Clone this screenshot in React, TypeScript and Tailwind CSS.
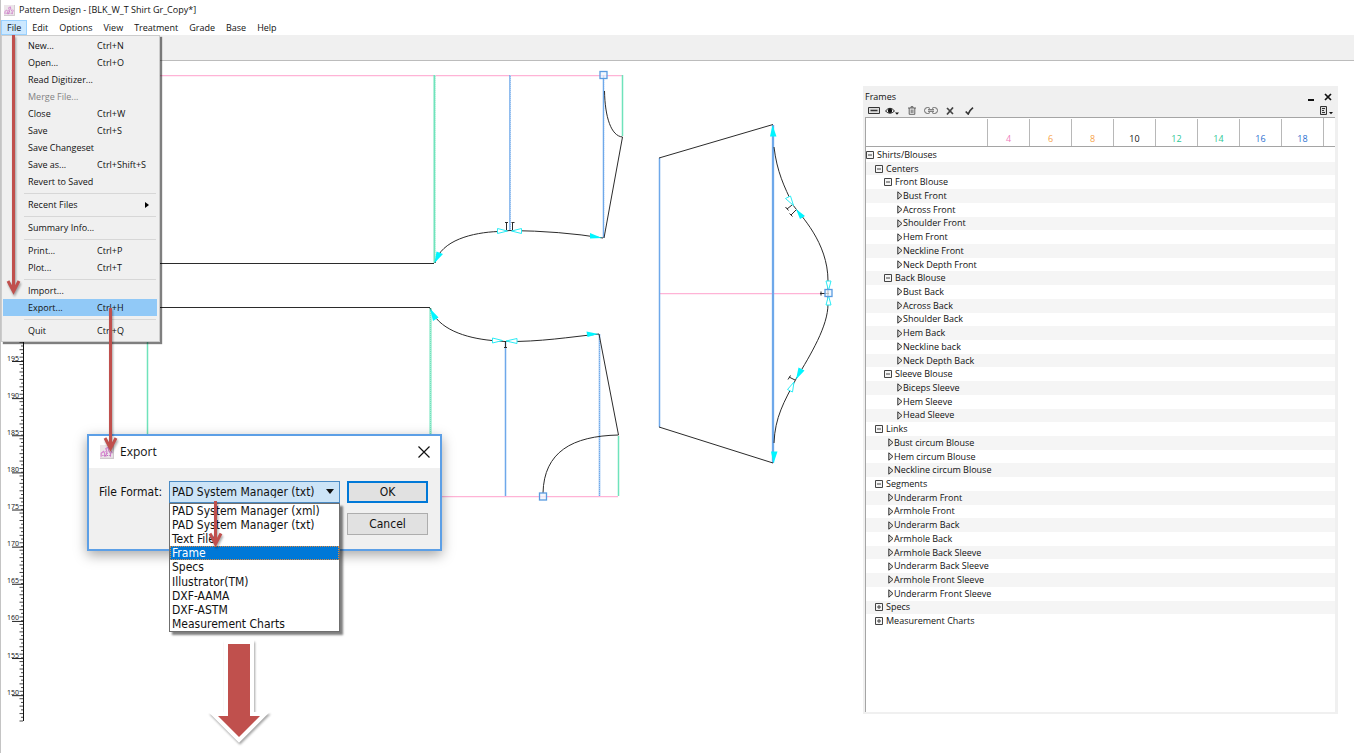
import React from 'react';

const MENUS = ['File', 'Edit', 'Options', 'View', 'Treatment', 'Grade', 'Base', 'Help'];

type MenuEntry = { label: string; keys?: string; disabled?: boolean; active?: boolean; submenu?: boolean };

// Each inner list is one block of the menu, with a separator between blocks
const FILE_MENU: MenuEntry[][] = [
  [
    { label: 'New...', keys: 'Ctrl+N' },
    { label: 'Open...', keys: 'Ctrl+O' },
    { label: 'Read Digitizer...' },
    { label: 'Merge File...', disabled: true },
    { label: 'Close', keys: 'Ctrl+W' },
    { label: 'Save', keys: 'Ctrl+S' },
    { label: 'Save Changeset' },
    { label: 'Save as...', keys: 'Ctrl+Shift+S' },
    { label: 'Revert to Saved' },
  ],
  [{ label: 'Recent Files', submenu: true }],
  [{ label: 'Summary Info...' }],
  [
    { label: 'Print...', keys: 'Ctrl+P' },
    { label: 'Plot...', keys: 'Ctrl+T' },
  ],
  [{ label: 'Import...' }, { label: 'Export...', keys: 'Ctrl+H', active: true }],
  [{ label: 'Quit', keys: 'Ctrl+Q' }],
];

const FORMATS = [
  'PAD System Manager (xml)',
  'PAD System Manager (txt)',
  'Text File',
  'Frame',
  'Specs',
  'Illustrator(TM)',
  'DXF-AAMA',
  'DXF-ASTM',
  'Measurement Charts',
];

const SIZES = [
  { size: 4, color: 'text-[#f07fc0]' },
  { size: 6, color: 'text-[#f7a34a]' },
  { size: 8, color: 'text-[#f7a34a]' },
  { size: 10, color: 'text-[#111111]' },
  { size: 12, color: 'text-[#2fc796]' },
  { size: 14, color: 'text-[#2fc796]' },
  { size: 16, color: 'text-[#2a6fd0]' },
  { size: 18, color: 'text-[#2a6fd0]' },
];

type Row = { label: string; depth: number; kind: 'open' | 'closed' | 'leaf' };

const leaves = (depth: number, labels: string[]): Row[] =>
  labels.map((label) => ({ label, depth, kind: 'leaf' }));

const TREE: Row[] = [
  { label: 'Shirts/Blouses', depth: 0, kind: 'open' },
  { label: 'Centers', depth: 1, kind: 'open' },
  { label: 'Front Blouse', depth: 2, kind: 'open' },
  ...leaves(3, ['Bust Front', 'Across Front', 'Shoulder Front', 'Hem Front', 'Neckline Front', 'Neck Depth Front']),
  { label: 'Back Blouse', depth: 2, kind: 'open' },
  ...leaves(3, ['Bust Back', 'Across Back', 'Shoulder Back', 'Hem Back', 'Neckline back', 'Neck Depth Back']),
  { label: 'Sleeve Blouse', depth: 2, kind: 'open' },
  ...leaves(3, ['Biceps Sleeve', 'Hem Sleeve', 'Head Sleeve']),
  { label: 'Links', depth: 1, kind: 'open' },
  ...leaves(2, ['Bust circum Blouse', 'Hem circum Blouse', 'Neckline circum Blouse']),
  { label: 'Segments', depth: 1, kind: 'open' },
  ...leaves(2, [
    'Underarm Front',
    'Armhole Front',
    'Underarm Back',
    'Armhole Back',
    'Armhole Back Sleeve',
    'Underarm Back Sleeve',
    'Armhole Front Sleeve',
    'Underarm Front Sleeve',
  ]),
  { label: 'Specs', depth: 1, kind: 'closed' },
  { label: 'Measurement Charts', depth: 1, kind: 'closed' },
];

const INDENT = ['pl-0', 'pl-[9px]', 'pl-[18px]', 'pl-[27px]'];

function AppIcon({ className }: { className: string }) {
  return (
    <svg viewBox="0 0 12 12" className={className} aria-hidden="true">
      <rect width="12" height="12" fill="#ece6ea" />
      <path d="M11.500 0v11.500H0" fill="none" stroke="#cfc8cc" />
      <path d="M1 10V7l2-1.500 1 1.500v3M5 10l1-4-1-3 2-1 .5 3L9 7v3M9.500 5l1 2" fill="none" stroke="#d583cf" />
      <path d="M2 9h8M4.500 5.500l2 2" stroke="#b768b8" strokeWidth=".8" strokeDasharray="1 1" />
    </svg>
  );
}

function FileMenu() {
  return (
    <div
      role="menu"
      className="absolute top-full left-0 z-20 w-[159px] border border-[#cccccc] bg-[#f0f0f0] pt-px pb-[2px] shadow-[2px_2px_1px_rgba(0,0,0,0.5)]">
      {FILE_MENU.map((block, i) => (
        <div key={i} role="group">
          {i > 0 && (
            <div className="mr-[3px] ml-[22px] flex h-[6px] items-center">
              <hr className="w-full border-[#d7d7d7]" />
            </div>
          )}
          {block.map((entry) => (
            <button
              key={entry.label}
              role="menuitem"
              disabled={entry.disabled}
              className={`mx-px flex h-[17px] w-[154px] items-center pl-[25px] text-left ${entry.active ? 'bg-[#91c9f7]' : ''} ${entry.disabled ? 'text-[#838383]' : ''}`}>
              <span className="w-[69px] whitespace-nowrap">{entry.label}</span>
              <span className="flex-1 whitespace-nowrap">{entry.keys}</span>
              {entry.submenu && (
                <svg viewBox="0 0 4 6" className="mr-2 h-[6px] w-1"><path d="M0 0l4 3-4 3z" /></svg>
              )}
            </button>
          ))}
        </div>
      ))}
    </div>
  );
}

// Vertical ruler: two ticks per unit, a number with a long tick every five units
function Ruler() {
  const unit = 37.13 / 5;
  const ticks = [];
  for (let n = 0; n <= 104; n++) {
    const y = 721 - n * (unit / 2);
    ticks.push(<path key={n} d={`M${n % 2 ? 21 : 19.5} ${y}H23`} stroke="#333" strokeWidth=".9" />);
  }
  return (
    <g>
      <path d="M23.500 330V721" stroke="#111" />
      {ticks}
      {[195, 190, 185, 180, 175, 170, 165, 160, 155, 150].map((value, i) => {
        const y = 361.5 + i * 37.13;
        return (
          <g key={value}>
            <path d={`M12 ${y}H23`} stroke="#222" />
            <text x="19" y={y - 1} textAnchor="end" fontSize="7" fill="#111">{value}</text>
          </g>
        );
      })}
    </g>
  );
}

function Handle({ x, y }: { x: number; y: number }) {
  return <rect x={x - 3.5} y={y - 3.5} width="7" height="7" fill="#eef5fd" fillOpacity=".7" stroke="#5a9be0" strokeWidth="1.3" />;
}

function PatternCanvas() {
  return (
    <svg className="absolute inset-0 size-full" aria-label="Pattern pieces">
      <g transform="translate(-1 -61)" fill="none">
        <Ruler />
        <g fill="#ffb3d6">
          <path d="M148 75h474v1.300H148zM148 496h470v1.300H148zM659 293h163v1.300H659z" />
        </g>
        <g stroke="#6fe3bb" strokeWidth="1.5">
          <path d="M147.500 308V496M622.500 75V136M618.500 436V496" />
          <path d="M434.500 75V263M430.500 308V496" strokeWidth="2" />
        </g>
        <g stroke="#6ea8ea" strokeWidth="1.5">
          <path d="M510 75V230M603.500 75V238M505.500 342V496M599.500 334V496M659.500 158V427" />
          <path d="M773 125V463" strokeWidth="2.300" />
        </g>
        <g stroke="#ffffff" strokeOpacity=".4" strokeDasharray="1 1">
          <path d="M510.500 75V230M604.500 79V238M599.500 334V496M435.500 75V263M430.500 308V496" />
        </g>
        {/* seam lines */}
        <g stroke="#2b2b2b">
          <path d="M148 263.500H434M148 307.500H430" />
          <path d="M435 263C441 240 473 232.500 498 231.500L510 230.500Q560 231 603 238" />
          <path d="M604.500 91C605 117 611 136 622.500 137L604 238" />
          <path d="M430 308C438 329 465 338 492 340.500L505 341.500C540 342 570 337 599 334L618.500 435" />
          <path d="M618.500 435C572 436 544 452 543 493" />
          <path d="M773 124.500L659 158M659 427L773 463" />
          <path d="M774 147C777 172 784 186 793 205C800 215 828 242 828 281V304C828 326 811 354 796 379C784 402 775 417 774 443" />
          <path d="M506.500 222V230M512.500 222V230M505 222.500h3M511.500 222.500h3M505.500 341V348M504 347.500h3" />
          <path d="M787 209L792 205M785.500 207l3 3.500M791 215l5-5M789.500 213.500l3 3M789 377l6 3M790.500 375.500l-2.500 4M820 293.500H829M821 291.500v4" />
        </g>
        <g fill="#00f5ff">
          <path d="M434.500 263l2-11.500 6.500 2.500zM602 238l-12-5v5.500zM430 308.500l8.500 9-5.500 3.500zM598.500 334l-12-2.500 1 5.500z" />
          <path d="M772.500 125l4 11.500h-6.500zM773.500 463.500l4-12h-6.500zM796 209l9 7-5 3zM796 379.500l2.500-12 6 3z" />
        </g>
        <g stroke="#2cecf5" fill="#ffffff">
          <path d="M497.500 228.500v5l10-2.500zM521.500 228.500v5l-10-2.500zM492.500 338v5l10-2.500zM517 338.500v5l-11-2.500z" />
          <path d="M785.500 198.500l5-2.500 3 9.500zM826 281h5l-2.500 9.500zM826 305h5l-2.500-9.500zM787.500 389.500l5 2.500 1.500-10z" />
        </g>
        <Handle x={603.5} y={75} />
        <Handle x={543} y={496.5} />
        <Handle x={828.5} y={293} />
      </g>
    </svg>
  );
}

function TreeMark({ kind }: { kind: Row['kind'] }) {
  if (kind === 'leaf') {
    return (
      <svg viewBox="0 0 6 9" className="ml-[4px] h-[9px] w-[6px]"><path d="M.8 .8v7.400L5 4.500z" fill="#ddd" stroke="#333" /></svg>
    );
  }
  return (
    <svg viewBox="0 0 8 8" className="mr-[3px] size-2">
      <path d={`M.5.5h7v7h-7zM2 4h4${kind === 'closed' ? 'M4 2v4' : ''}`} fill="#f5f5f5" stroke="#444" />
    </svg>
  );
}

function FramesPanel() {
  return (
    <section className="absolute top-[25px] right-[18px] z-10 flex h-[628px] w-[475px] flex-col bg-[#f0f0f0] pr-[3px] pb-[2px] pl-[2px] text-[9px] text-[#111111]">
      <header className="flex h-[18px] items-center justify-between pt-[3px] pr-[3px]">
        <h2>Frames</h2>
        <div className="flex gap-2">
          <button aria-label="Minimize" className="flex size-2 items-end"><span className="h-[2px] w-[6px] bg-[#111111]" /></button>
          <button aria-label="Close">
            <svg viewBox="0 0 8 8" className="size-2"><path d="M1 1l6 6M7 1L1 7" stroke="#111" strokeWidth="1.700" /></svg>
          </button>
        </div>
      </header>
      <div className="flex h-[13px] items-center pl-[3px]">
        <button aria-label="Sizes">
          <svg viewBox="0 0 12 7" className="h-[7px] w-3"><path d="M.5.5h11v6H.5z" fill="#ddd" stroke="#333" /><path d="M2.500 3.500h7" stroke="#333" strokeWidth="1.500" /></svg>
        </button>
        <button aria-label="Visibility" className="ml-[5px]">
          <svg viewBox="0 0 14 8" className="h-2 w-[14px]">
            <path d="M.5 4Q5 -1.500 9.500 4Q5 8.500 .5 4z" fill="#fff" stroke="#222" />
            <circle cx="5" cy="3.800" r="2.200" fill="#111" /><path d="M10 5.500h4l-2 2.300z" fill="#111" />
          </svg>
        </button>
        <button aria-label="Delete" className="ml-[9px]">
          <svg viewBox="0 0 8 9" className="h-[9px] w-2"><path d="M0 2h8M3 2V.7h2V2M1.200 2v6.300h5.600V2M3.200 3.500v3.500M4.900 3.500v3.500" fill="none" stroke="#555" strokeWidth=".9" /></svg>
        </button>
        <button aria-label="Link" className="ml-[8px]">
          <svg viewBox="0 0 14 7" className="h-[7px] w-[14px]"><path d="M6 1.500Q5 .5 3.500 .5a3 3 0 0 0 0 6Q5 6.500 6 5.500M8 1.500Q9 .5 10.500 .5a3 3 0 0 1 0 6Q9 6.500 8 5.500M4 2.700h6M4 4.300h6" fill="none" stroke="#666" /></svg>
        </button>
        <button aria-label="Cancel" className="ml-[8px]">
          <svg viewBox="0 0 8 8" className="size-2"><path d="M1 1l6 6M7 .5L1 7.500" stroke="#444" strokeWidth="1.700" /></svg>
        </button>
        <button aria-label="Apply" className="ml-[11px]">
          <svg viewBox="0 0 9 8" className="h-2 w-[9px]"><path d="M.7 4.500L3.200 7Q4.500 3.500 8 .7" fill="none" stroke="#333" strokeWidth="1.700" /></svg>
        </button>
        <button aria-label="List options" className="mr-[2px] ml-auto">
          <svg viewBox="0 0 14 9" className="h-[9px] w-[14px]">
            <path d="M1.500.5h6v8h-6z" fill="#ddd" stroke="#333" /><path d="M3 2.500h3M3 4.500h2M3 6.500h3" stroke="#333" /><path d="M10 6h4l-2 2.300z" fill="#111" />
          </svg>
        </button>
      </div>
      <table className="flex min-h-0 flex-1 flex-col border-t border-l border-[#a5a5a5] bg-white">
        <thead className="block">
          <tr className="flex h-[29px] items-end border-b border-[#a5a5a5]">
            <th aria-label="Name" className="h-full w-[121px]" />
            {SIZES.map(({ size, color }) => (
              <th key={size} className={`flex h-[27px] w-[42px] items-end justify-center border-l border-[#b8b8b8] pb-px font-normal ${color}`}>{size}</th>
            ))}
            <th aria-label="More" className="h-full flex-1 border-l border-[#b8b8b8]" />
          </tr>
        </thead>
        <tbody className="mt-px grid h-[480px] auto-rows-fr">
          {TREE.map((row) => (
            <tr key={row.label} className="flex even:bg-[#f5f5f5]">
              <td className={`flex items-center whitespace-nowrap ${INDENT[row.depth]}`}>
                <TreeMark kind={row.kind} />
                {row.label}
              </td>
            </tr>
          ))}
        </tbody>
      </table>
    </section>
  );
}

function ExportDialog() {
  return (
    <div
      role="dialog"
      aria-label="Export"
      className="absolute top-[373px] left-[86px] z-10 flex h-[117px] w-[355px] flex-col border-2 border-[#5c9fe6] bg-[#f0f0f0] text-[12px] text-[#111111] shadow-[0_4px_12px_rgba(0,0,0,0.35)]">
      <header className="flex h-8 items-center bg-white pr-[10px] pl-[11px]">
        <AppIcon className="size-[14px]" />
        <h2 className="ml-[6px]">Export</h2>
        <button aria-label="Close" className="ml-auto">
          <svg viewBox="0 0 12 12" className="size-3"><path d="M.5.5l11 11M11.500.5l-11 11" stroke="#111" strokeWidth="1.200" /></svg>
        </button>
      </header>
      <div className="flex items-start pt-[13px] pr-3 pl-[10px] font-['DejaVu_Sans_Condensed','DejaVu_Sans',sans-serif]">
        <label htmlFor="format" className="w-[70px] leading-[22px] whitespace-nowrap">File Format:</label>
        <div className="relative w-[171px]">
          <select
            id="format"
            defaultValue="PAD System Manager (txt)"
            className="h-[22px] w-full appearance-none border border-[#4b8bc4] bg-[#cce4f7] pl-[2px] outline-none">
            {FORMATS.map((format) => <option key={format}>{format}</option>)}
          </select>
          <svg viewBox="0 0 8 5" className="pointer-events-none absolute top-2 right-[6px] h-[5px] w-2"><path d="M0 0h8L4 5z" fill="#111" /></svg>
          <ul
            role="listbox"
            aria-label="File Format"
            className="absolute top-full left-0 grid h-[129px] w-full auto-rows-fr border border-[#6f6f6f] bg-white leading-[12px] shadow-[3px_3px_2px_rgba(0,0,0,0.5)]">
            {FORMATS.map((format) => (
              <li
                key={format}
                role="option"
                aria-selected={format === 'Frame'}
                className={`flex items-center border border-dotted pl-px whitespace-nowrap ${format === 'Frame' ? 'border-[#e08a3c] bg-[#0078d7] text-white' : 'border-transparent'}`}>
                {format}
              </li>
            ))}
          </ul>
        </div>
        <div className="ml-[7px] flex flex-1 flex-col gap-[10px] font-['DejaVu_Sans_Condensed','DejaVu_Sans',sans-serif]">
          <button className="h-[22px] border-2 border-[#0078d7] bg-[#e1e1e1]">OK</button>
          <button className="h-[22px] border border-[#adadad] bg-[#e1e1e1]">Cancel</button>
        </div>
      </div>
    </div>
  );
}

// Red step arrows, drawn above every window
function StepArrows() {
  return (
    <svg className="pointer-events-none absolute inset-0 z-30 size-full drop-shadow-[1px_2px_1px_rgba(0,0,0,0.35)]" aria-hidden="true">
      <g transform="translate(-1 0)">
        <g fill="none" stroke="#c0504d" strokeWidth="3">
          <path d="M13.500 35V290M8 281l5.500 10.500 5.500-10.500" />
          <path d="M110.500 308V448M105 438l5.500 10.500 5.500-10.500" />
          <path d="M215.500 501V543M210 533.500l5.500 10.500 5.500-10.500" />
        </g>
        <path d="M228 644h22v72h10l-21 21-21-21h10z" fill="#fff" stroke="#fff" strokeWidth="8" />
        <path d="M228 644h22v72h10l-21 21-21-21h10z" fill="#c0504d" />
      </g>
    </svg>
  );
}

export default function App() {
  return (
    <div className="relative flex min-h-screen flex-col border-l border-[#c4c4c4] bg-white font-['Open_Sans','Noto_Sans',sans-serif] text-[9px] leading-[12px] text-[#111111]">
      <header className="flex h-5 items-center gap-1 pl-[3px]">
        <AppIcon className="size-[11px]" />
        <h1>Pattern Design - [BLK_W_T Shirt Gr_Copy*]</h1>
      </header>
      <nav className="relative flex h-[15px]">
        {MENUS.map((name) => (
          <button
            key={name}
            className={`-mr-px flex items-center border px-[5px] ${name === 'File' ? 'border-[#99d1ff] bg-[#cce8ff]' : 'border-transparent'}`}>
            {name}
          </button>
        ))}
        <FileMenu />
      </nav>
      <div className="mr-[2px] h-[26px] border-b border-[#bcbcbc] bg-[#f0f0f0]" />
      <main className="relative flex-1 overflow-hidden">
        <PatternCanvas />
        <ExportDialog />
        <FramesPanel />
      </main>
      <StepArrows />
    </div>
  );
}
